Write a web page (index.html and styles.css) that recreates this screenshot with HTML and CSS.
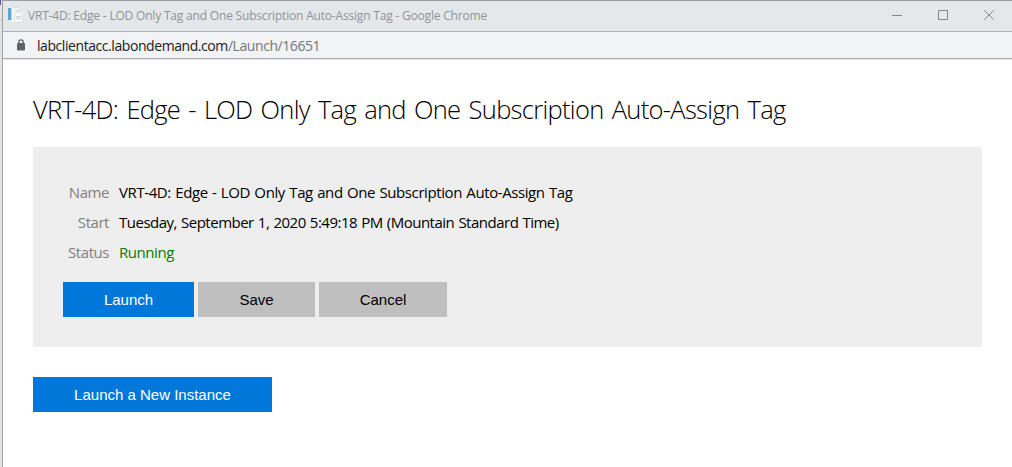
FILE: index.html
```html
<!DOCTYPE html>
<html lang="en">
<head>
<meta charset="utf-8">
<title>VRT-4D: Edge - LOD Only Tag and One Subscription Auto-Assign Tag</title>
<link rel="stylesheet" href="styles.css">
</head>
<body>
<div class="desktop-edge"><span class="edge-accent"></span><span class="edge-line"></span></div>
<div class="window">
  <header class="titlebar">
    <svg class="favicon" width="16" height="16" viewBox="0 0 16 16">
      <path fill="#f6f8f9" d="M3 0h10v5h3v11H6v-2H3z"/>
      <path fill="#5ea6d4" d="M1 1h3v12H1z"/>
      <path fill="#b4d4e8" d="M4 1h1v12H4z"/>
      <path fill="none" stroke="#dce0e3" d="M12.500 5V.500H5M7.500 14V5.500h5l3 3v7h-8z"/>
      <path fill="none" stroke="#c9cfd4" d="M8 3.500h4M9 9.500h5M9 11.500h5"/>
    </svg>
    <span class="window-title">VRT-4D: Edge - LOD Only Tag and One Subscription Auto-Assign Tag - Google Chrome</span>
    <svg class="controls" width="103" height="12" viewBox="0 0 103 12" fill="none" stroke="#85888b">
      <path d="M0 6.500h10M46.500 1.500h9v9h-9z"/>
      <path d="M92.300 1.300l9.400 9.400M101.700 1.300l-9.400 9.400"/>
    </svg>
  </header>
  <div class="addressbar">
    <svg class="lock" width="8" height="12" viewBox="0 0 8 12">
      <path fill="none" stroke="#5f6368" stroke-width="1.300" d="M1.800 5V3a2.200 2.200 0 0 1 4.400 0v2"/>
      <rect y="4" width="8" height="7.500" rx="1" fill="#5f6368"/>
    </svg>
    <span class="url">labclientacc.labondemand.com<span class="path">/Launch/16651</span></span>
  </div>
  <main class="page">
    <h1>VRT-4D: Edge - LOD Only Tag and One Subscription Auto-Assign Tag</h1>
    <section class="panel">
      <dl class="details">
        <dt>Name</dt><dd class="name">VRT-4D: Edge - LOD Only Tag and One Subscription Auto-Assign Tag</dd>
        <dt>Start</dt><dd class="start">Tuesday, September 1, 2020 5:49:18 PM (Mountain Standard Time)</dd>
        <dt>Status</dt><dd class="running">Running</dd>
      </dl>
      <div class="actions">
        <button class="button primary launch">Launch</button>
        <button class="button save">Save</button>
        <button class="button cancel">Cancel</button>
      </div>
    </section>
    <button class="button primary new-instance">Launch a New Instance</button>
  </main>
</div>
</body>
</html>
```
FILE: styles.css
```css
* { box-sizing: border-box; }
body {
  margin: 0;
  height: 467px;
  display: flex;
  overflow: hidden;
  background: #fff;
  font-family: "Open Sans", "Noto Sans", sans-serif;
  white-space: nowrap;
}
.desktop-edge { width: 2px; background: #e2e2e3; }
.edge-accent { display: block; width: 1px; height: 5px; background: #5b57a6; }
.edge-line { display: block; height: 1px; margin-top: 14px; background: #c8c8c8; }
.window {
  flex: 1;
  border-left: 1px solid #a2a3a5;
  border-top: 1px solid #9b9ea2;
}
.titlebar {
  height: 31px;
  display: flex;
  align-items: center;
  padding: 0 17px 2px 4px;
  background: #e5e8eb;
  border-bottom: 1px solid #afb1b4;
}
.window-title {
  flex: 1;
  margin-left: 5px;
  font-size: 12px;
  letter-spacing: -0.190px;
  color: #909396;
}
.addressbar {
  height: 27px;
  display: flex;
  align-items: center;
  padding-left: 14px;
  background: #f1f3f4;
  border-bottom: 1px solid #abadb0;
  box-shadow: 0 1px 0 #e4e5e6;
}
.url {
  margin-left: 12px;
  font-size: 14px;
  letter-spacing: -0.430px;
  color: #202124;
}
.path { color: #74777b; }
.page { padding: 30px; }
h1 {
  height: 40px;
  margin: 0 0 18px;
  line-height: 40px;
  font-size: 25.5px;
  font-weight: 300;
  letter-spacing: -0.690px;
  word-spacing: 2.200px;
  color: #000;
}
.panel {
  height: 200px;
  padding: 30px;
  margin-bottom: 30px;
  background: #eee;
}
.details {
  display: grid;
  grid-template-columns: 46px 1fr;
  grid-auto-rows: 30px;
  column-gap: 10px;
  margin: 0 0 15px;
  font-size: 15px;
  line-height: 31px;
  letter-spacing: -0.450px;
  color: #000;
}
dt { text-align: right; color: #808080; }
dd { margin: 0; }
.name { letter-spacing: -0.410px; word-spacing: 0.900px; }
.start { letter-spacing: -0.500px; word-spacing: 0.700px; }
.running { color: #008000; }
.actions { display: flex; gap: 4px; }
.button {
  height: 35px;
  padding: 0;
  border: 0;
  border-radius: 0;
  background: #bfbfbf;
  color: #000;
  font-family: "Liberation Sans", Arial, sans-serif;
  font-size: 15px;
}
.primary { background: #0078d9; color: #fff; }
.launch { width: 131px; }
.save { width: 117px; }
.cancel { width: 128px; }
.new-instance { width: 239px; display: block; }
```
